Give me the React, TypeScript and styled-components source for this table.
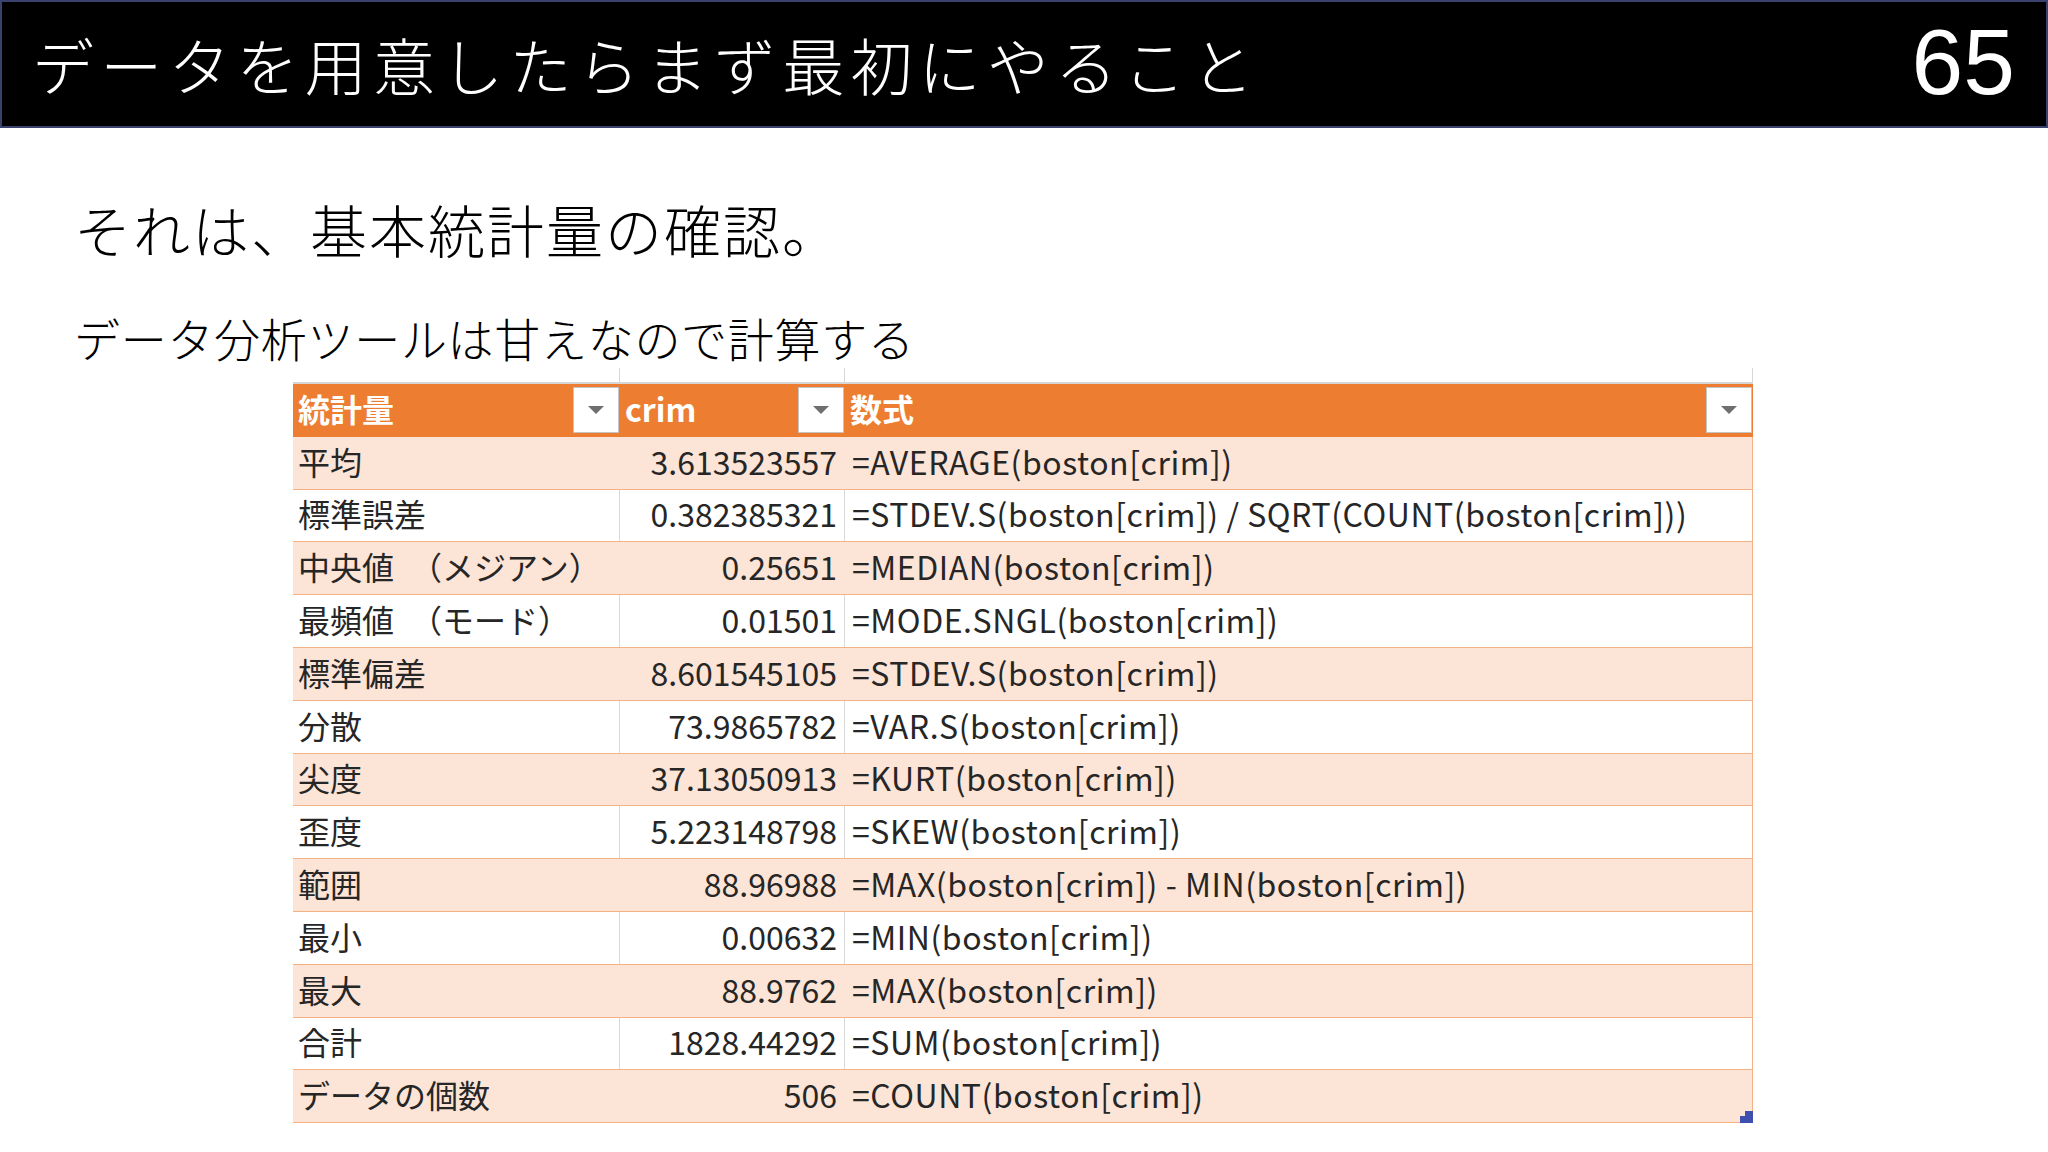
import React from "react";
import styled, { createGlobalStyle } from "styled-components";

const GlobalStyle = createGlobalStyle`
  html, body { margin: 0; padding: 0; background: #ffffff; }
  body { font-family: "Noto Sans CJK JP", "Noto Sans", sans-serif; }
`;

const Page = styled.div`
  width: 2048px;
  height: 1152px;
  overflow: hidden;
  background: #ffffff;
  display: flex;
  flex-direction: column;
`;

const TitleBar = styled.header`
  box-sizing: border-box;
  height: 128px;
  background: #000000;
  border: 2px solid #39416f;
  display: flex;
  justify-content: space-between;
  align-items: flex-start;
  padding: 0 31px 0 30px;
`;

const Title = styled.h1`
  margin: 31px 0 0;
  font-family: "Noto Sans CJK JP", sans-serif;
  font-weight: 300;
  font-size: 62px;
  line-height: 1;
  letter-spacing: 6.2px;
  color: #ffffff;
`;

const PageNumber = styled.div`
  margin-top: 14px;
  font-family: "Liberation Sans", Arial, sans-serif;
  font-size: 93px;
  line-height: 1;
  color: #ffffff;
`;

const Content = styled.main`
  display: flex;
  flex-direction: column;
  padding-left: 74px;
`;

const Lead = styled.p`
  margin: 72px 0 0;
  font-size: 57px;
  font-weight: 300;
  letter-spacing: 2px;
  line-height: 1;
  color: #000000;
`;

const Note = styled.p`
  margin: 57px 0 0;
  font-size: 46px;
  font-weight: 300;
  letter-spacing: 0.7px;
  line-height: 1;
  color: #000000;
`;

const TableWrap = styled.div`
  position: relative;
  margin: 8px 0 0 219px;
  width: 1460px;
  font-family: "Noto Sans CJK JP", sans-serif;
  font-size: 32px;
`;

const columns = "327px 225px 908px";

const StubRow = styled.div`
  display: grid;
  grid-template-columns: ${columns};
  height: 14px;
  border-bottom: 2px solid #d6d6d6;
`;

const Stub = styled.div`
  border-right: 1px solid #d6d6d6;
`;

type Variant = "head" | "band" | "plain";

const Row = styled.div<{ $variant: Variant }>`
  box-sizing: border-box;
  display: grid;
  grid-template-columns: ${columns};
  height: 52.8px;
  background: ${(p) =>
    p.$variant === "head" ? "#ed7d31" : p.$variant === "band" ? "#fce4d6" : "#ffffff"};
  border-bottom: 1px solid ${(p) => (p.$variant === "head" ? "#ed7d31" : "#f4b183")};
  border-right: 1px solid ${(p) => (p.$variant === "head" ? "#ed7d31" : "#f4b183")};
  color: ${(p) => (p.$variant === "head" ? "#ffffff" : "#262626")};
  font-weight: ${(p) => (p.$variant === "head" ? 700 : 400)};
`;

const Cell = styled.div<{ $align?: "left" | "right"; $sep?: boolean; $wide?: boolean }>`
  box-sizing: border-box;
  display: flex;
  align-items: center;
  justify-content: ${(p) => (p.$align === "right" ? "flex-end" : "flex-start")};
  padding: ${(p) => (p.$align === "right" ? "0 7px 4px 0" : p.$wide ? "0 0 4px 7px" : "0 0 4px 5px")};
  border-right: 1px solid ${(p) => (p.$sep ? "#d9d9d9" : "transparent")};
  letter-spacing: ${(p) => (p.$wide ? "0.55px" : "0")};
  white-space: pre;
  line-height: 1;
  min-width: 0;
`;

const HeadCell = styled.div`
  box-sizing: border-box;
  display: flex;
  align-items: center;
  justify-content: space-between;
  padding: 0 1px 0 5px;
  line-height: 1;
`;

const HeadLabel = styled.span`
  padding-bottom: 4px;
`;

const FilterButton = styled.div`
  box-sizing: border-box;
  width: 46px;
  height: 46px;
  background: #ffffff;
  border: 1px solid #c4c4c4;
  display: flex;
  align-items: center;
  justify-content: center;
`;

const Handle = styled.svg`
  position: absolute;
  right: 0;
  bottom: 0;
`;

const rows: [string, string, string][] = [
  ["平均", "3.613523557", "=AVERAGE(boston[crim])"],
  ["標準誤差", "0.382385321", "=STDEV.S(boston[crim]) / SQRT(COUNT(boston[crim]))"],
  ["中央値　（メジアン）", "0.25651", "=MEDIAN(boston[crim])"],
  ["最頻値　（モード）", "0.01501", "=MODE.SNGL(boston[crim])"],
  ["標準偏差", "8.601545105", "=STDEV.S(boston[crim])"],
  ["分散", "73.9865782", "=VAR.S(boston[crim])"],
  ["尖度", "37.13050913", "=KURT(boston[crim])"],
  ["歪度", "5.223148798", "=SKEW(boston[crim])"],
  ["範囲", "88.96988", "=MAX(boston[crim]) - MIN(boston[crim])"],
  ["最小", "0.00632", "=MIN(boston[crim])"],
  ["最大", "88.9762", "=MAX(boston[crim])"],
  ["合計", "1828.44292", "=SUM(boston[crim])"],
  ["データの個数", "506", "=COUNT(boston[crim])"],
];

const Caret = () => (
  <svg width="16" height="8" viewBox="0 0 16 8">
    <path d="M0 0 H16 L8 8 Z" fill="#6f6f6f" />
  </svg>
);

const Filter = () => (
  <FilterButton>
    <Caret />
  </FilterButton>
);

export default function App() {
  return (
    <Page>
      <GlobalStyle />
      <TitleBar>
        <Title>データを用意したらまず最初にやること</Title>
        <PageNumber>65</PageNumber>
      </TitleBar>
      <Content>
        <Lead>それは、基本統計量の確認。</Lead>
        <Note>データ分析ツールは甘えなので計算する</Note>
        <TableWrap>
          <StubRow>
            <Stub />
            <Stub />
            <Stub />
          </StubRow>
          <Row $variant="head">
            <HeadCell>
              <HeadLabel>統計量</HeadLabel>
              <Filter />
            </HeadCell>
            <HeadCell>
              <HeadLabel>crim</HeadLabel>
              <Filter />
            </HeadCell>
            <HeadCell>
              <HeadLabel>数式</HeadLabel>
              <Filter />
            </HeadCell>
          </Row>
          {rows.map(([label, value, formula], i) => {
            const band = i % 2 === 0;
            return (
              <Row key={label} $variant={band ? "band" : "plain"}>
                <Cell $sep={!band}>{label}</Cell>
                <Cell $align="right" $sep={!band}>
                  {value}
                </Cell>
                <Cell $wide>{formula}</Cell>
              </Row>
            );
          })}
          <Handle width="13" height="12" viewBox="0 0 13 12">
            <path d="M0 5 H5 V0 H13 V12 H0 Z" fill="#3f4fb0" />
          </Handle>
        </TableWrap>
      </Content>
    </Page>
  );
}
